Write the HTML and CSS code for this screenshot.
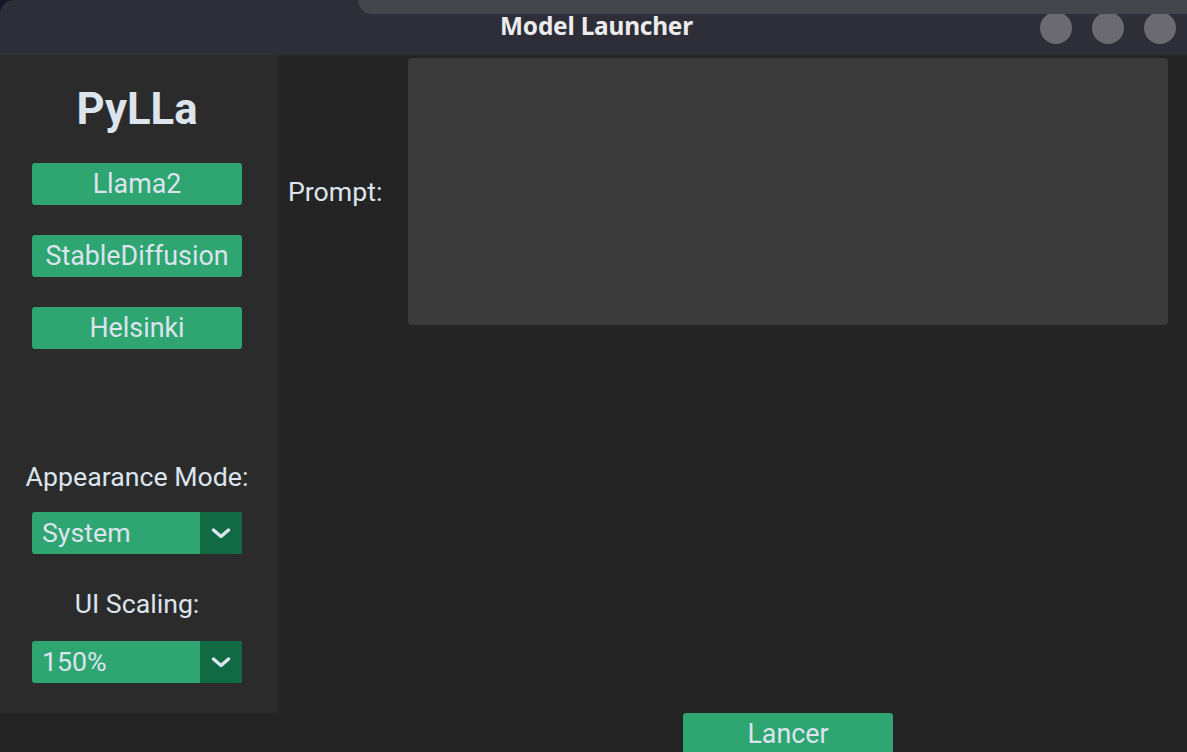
FILE: index.html
```html
<!DOCTYPE html>
<html lang="fr">
<head>
<meta charset="utf-8">
<title>Model Launcher</title>
<link rel="stylesheet" href="styles.css">
</head>
<body>
<div class="window">
  <header class="titlebar">
    <div class="behind-strip"></div>
    <div class="tb-left"></div>
    <div class="tb-title">Model Launcher</div>
    <div class="tb-controls">
      <span class="tb-dot"></span>
      <span class="tb-dot"></span>
      <span class="tb-dot"></span>
    </div>
  </header>
  <div class="content">
    <aside class="sidebar">
      <div class="logo">PyLLa</div>
      <div class="model-list">
        <button class="btn">Llama2</button>
        <button class="btn">StableDiffusion</button>
        <button class="btn">Helsinki</button>
      </div>
      <div class="spacer"></div>
      <div class="label label-appearance">Appearance Mode:</div>
      <div class="option">
        <span class="option-text">System</span>
        <span class="option-arrow"><svg width="20" height="11" viewBox="0 0 20 11"><path d="M2.5 2 L10 8.5 L17.5 2" fill="none" stroke="#dce4ee" stroke-width="3.4" stroke-linecap="round" stroke-linejoin="round"/></svg></span>
      </div>
      <div class="label label-scaling">UI Scaling:</div>
      <div class="option">
        <span class="option-text">150%</span>
        <span class="option-arrow"><svg width="20" height="11" viewBox="0 0 20 11"><path d="M2.5 2 L10 8.5 L17.5 2" fill="none" stroke="#dce4ee" stroke-width="3.4" stroke-linecap="round" stroke-linejoin="round"/></svg></span>
      </div>
    </aside>
    <main class="main">
      <div class="prompt-row">
        <label class="prompt-label">Prompt:</label>
        <div class="prompt-box"></div>
      </div>
      <div class="launch-row">
        <button class="btn btn-launch">Lancer</button>
      </div>
    </main>
  </div>
</div>
</body>
</html>
```

FILE: styles.css
```css
html, body {
  margin: 0;
  padding: 0;
}
body {
  width: 1187px;
  height: 752px;
  overflow: hidden;
  background: #15152a;
  font-family: Roboto, "Liberation Sans", sans-serif;
  color: #dce4ee;
}
.window {
  display: flex;
  flex-direction: column;
  height: 752px;
}
.titlebar {
  position: relative;
  height: 55px;
  flex: none;
  background: #2d2e37;
  border-top-left-radius: 14px;
  display: grid;
  grid-template-columns: 1fr auto 1fr;
  align-items: center;
}
.behind-strip {
  position: absolute;
  left: 358px;
  right: 0;
  top: 0;
  height: 14px;
  background: #45464c;
  border-bottom-left-radius: 14px;
}
.tb-title {
  position: relative;
  font-family: "Noto Sans", sans-serif;
  font-weight: 700;
  font-size: 24.4px;
  line-height: 30px;
  color: #ececee;
  padding-left: 6px;
  margin-bottom: 4px;
  letter-spacing: -0.2px;
}
.tb-controls {
  display: flex;
  justify-content: flex-end;
  gap: 20px;
  padding-right: 11px;
}
.tb-dot {
  width: 32px;
  height: 32px;
  border-radius: 50%;
  background: #6b6a70;
}
.content {
  flex: 1;
  display: flex;
  background: #242424;
  min-height: 0;
}
.sidebar {
  width: 278px;
  height: 658px;
  flex: none;
  background: #2b2b2b;
  display: flex;
  flex-direction: column;
  align-items: center;
  box-sizing: border-box;
  padding: 29px 0 30px;
}
.logo {
  font-size: 43.7px;
  font-weight: 700;
  line-height: 50px;
  color: #dce4ee;
  padding-right: 4px;
}
.model-list {
  margin-top: 29px;
  display: flex;
  flex-direction: column;
  gap: 30px;
  padding-right: 4px;
}
.btn {
  width: 210px;
  height: 42px;
  border: none;
  border-radius: 3px;
  background: #2fa572;
  color: #dce4ee;
  font-family: Roboto, "Liberation Sans", sans-serif;
  font-size: 26.8px;
  padding: 0;
  line-height: 42px;
}
.spacer {
  flex: 1;
}
.label {
  font-size: 26.7px;
  line-height: 42px;
  color: #dce4ee;
}
.label-appearance {
  margin-bottom: 14px;
  padding-right: 4px;
}
.label-scaling {
  margin-top: 29px;
  margin-bottom: 16px;
  padding-right: 4px;
}
.option {
  width: 210px;
  height: 42px;
  display: flex;
  border-radius: 3px;
  overflow: hidden;
  background: #2fa572;
  margin-right: 4px;
}
.option-text {
  flex: 1;
  font-size: 26.7px;
  line-height: 42px;
  padding-left: 10px;
}
.option-arrow {
  width: 42px;
  background: #106a43;
  display: flex;
  align-items: center;
  justify-content: center;
}
.main {
  flex: 1;
  display: flex;
  flex-direction: column;
}
.prompt-row {
  display: flex;
  align-items: center;
  padding: 3px 19px 0 10px;
}
.prompt-label {
  width: 120px;
  font-size: 26.7px;
  line-height: 42px;
  color: #dce4ee;
}
.prompt-box {
  flex: 1;
  height: 267px;
  background: #3b3b3b;
  border-radius: 4px;
}
.launch-row {
  margin-top: auto;
  padding-left: 405px;
  height: 39px;
  overflow: hidden;
}
.btn-launch {
  display: block;
}
```
